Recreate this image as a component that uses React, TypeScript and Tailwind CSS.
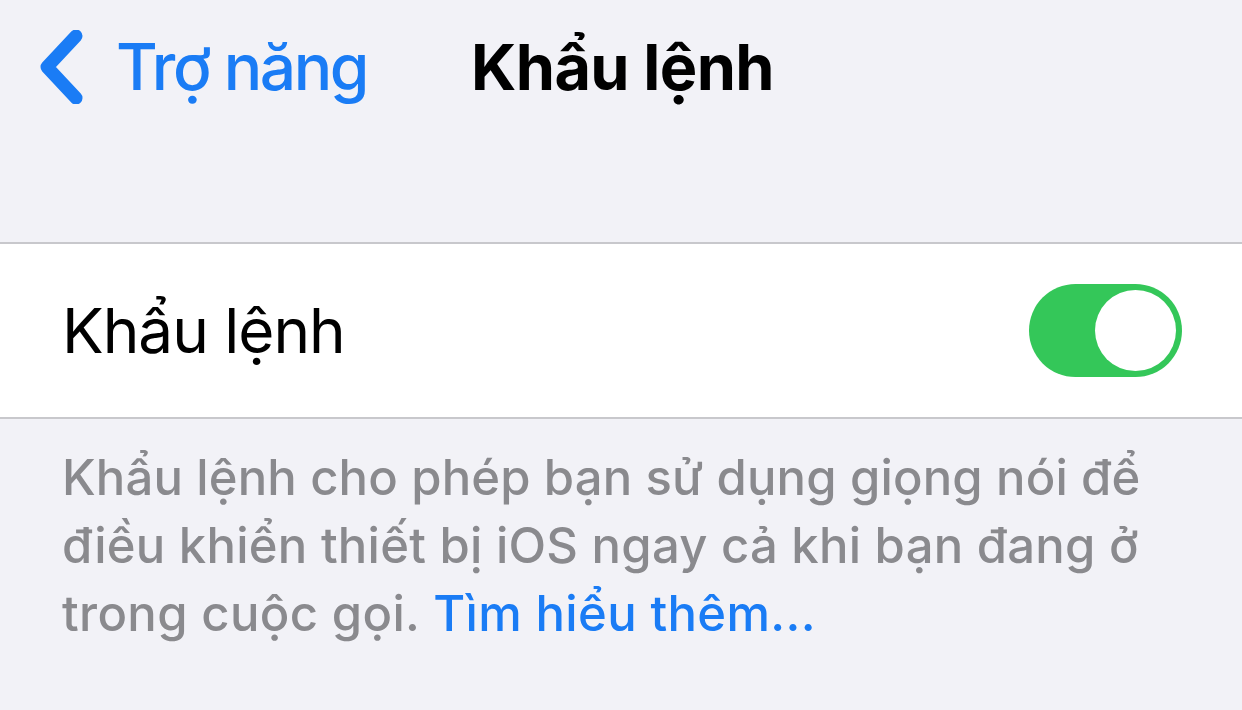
import React from "react";

// iOS Settings — "Khẩu lệnh" (Voice Control) detail screen, zoomed

function BackChevron() {
  return (
    <svg width="46" height="74" viewBox="0 0 46 74" fill="none" aria-hidden="true">
      <path
        d="M36 6 L7 37 L36 68"
        stroke="#1a7cf5"
        strokeWidth="13"
        strokeLinecap="round"
        strokeLinejoin="round"
      />
    </svg>
  );
}

function Toggle() {
  return (
    <div className="flex h-[93px] w-[153px] items-center justify-end rounded-full bg-[#34c759] pr-[6px]">
      <div className="h-[81px] w-[81px] rounded-full bg-white" />
    </div>
  );
}

export default function App() {
  return (
    <div
      className="h-[710px] w-[1242px] overflow-hidden bg-[#f2f2f7]"
      style={{ fontFamily: "Inter, 'Noto Sans', sans-serif" }}
    >
      {/* Nav bar */}
      <div className="flex h-[134px] items-center">
        <div className="flex items-center pl-[40px] text-[#1a7cf5]">
          <BackChevron />
          <span className="ml-[30px] text-[64px] leading-none font-medium tracking-[-2.4px]">
            Trợ năng
          </span>
        </div>
        <span className="ml-[104px] text-[63px] leading-none font-bold tracking-[-0.6px] text-black">
          Khẩu lệnh
        </span>
      </div>

      {/* Section */}
      <div className="mt-[108px] flex h-[177px] items-center justify-between border-y-2 border-[#c8c8cc] bg-white pr-[60px] pl-[62px]">
        <span className="text-[62px] leading-none font-normal tracking-[-1px] text-black">
          Khẩu lệnh
        </span>
        <Toggle />
      </div>

      {/* Footer */}
      <p className="flex flex-col px-[62px] pt-[25px] text-[49px] leading-[68px] font-medium whitespace-nowrap text-[#8a8a8e]">
        <span className="tracking-[0.15px]">Khẩu lệnh cho phép bạn sử dụng giọng nói để</span>
        <span className="tracking-[0.25px]">điều khiển thiết bị iOS ngay cả khi bạn đang ở</span>
        <span className="tracking-[0.35px]">
          trong cuộc gọi. <span className="text-[#1a7cf5]">Tìm hiểu thêm...</span>
        </span>
      </p>
    </div>
  );
}
